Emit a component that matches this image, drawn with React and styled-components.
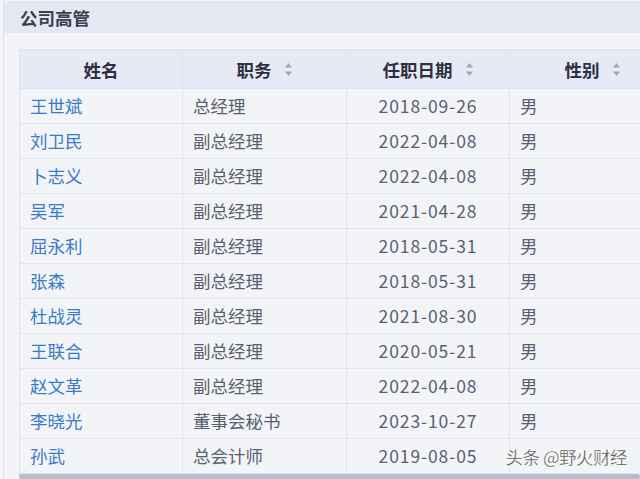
import React from "react";
import styled, { createGlobalStyle } from "styled-components";

const Global = createGlobalStyle`
  html, body { margin: 0; padding: 0; background: #f3f4f8; overflow: hidden; }
  body { font-family: "Noto Sans CJK SC", "Noto Sans", sans-serif; }
`;

const Page = styled.div`
  width: 640px;
  height: 479px;
  position: relative;
  overflow: hidden;
  background: #f3f4f8;
`;

const Panel = styled.div`
  margin-left: 3px;
  border-left: 1px solid #e2e4ec;
  height: 100%;
  display: flex;
  flex-direction: column;
`;

const TitleBar = styled.div`
  margin-top: 1px;
  height: 36px;
  background: #e5e8f2;
  display: flex;
  align-items: center;
  padding-left: 16px;
  font-size: 17.5px;
  font-weight: 700;
  color: #3a3f4f;
`;

const TableWrap = styled.div`
  margin: 16px 0 0 15px;
  position: relative;
`;

const Table = styled.table`
  border-collapse: collapse;
  table-layout: fixed;
  width: 656px;
  font-size: 17.5px;
`;

const Th = styled.th`
  height: 38px;
  background: #e7eaf5;
  color: #2c3142;
  font-weight: 700;
  text-align: center;
  border: 1px solid #e0e3ed;
  padding: 0;
  white-space: nowrap;
`;

const Td = styled.td`
  height: 34px;
  border: 1px solid #e3e5ee;
  padding: 0 ${(p) => (p.$align === "center" ? 0 : 10)}px;
  text-align: ${(p) => p.$align || "left"};
  color: ${(p) => (p.$link ? "#3b7bc4" : "#5a5f6f")};
  letter-spacing: ${(p) => (p.$align === "center" ? "0.9px" : "0")};
  white-space: nowrap;
  background: #f3f4f8;
  line-height: 1;
`;

const HeadInner = styled.span`
  display: inline-flex;
  align-items: center;
  gap: 12px;
`;

const Scroll = styled.div`
  height: 5px;
  background: #b8bcc9;
  border-radius: 2px;
`;

const Watermark = styled.div`
  position: absolute;
  right: 13px;
  bottom: 10px;
  font-size: 17.5px;
  color: #4a4a4a;
  font-family: "Noto Sans CJK SC", sans-serif;
  -webkit-text-stroke: 0.3px #ffffff;
  text-shadow: 0 0 2px #fff, 0 0 2px #fff;
  letter-spacing: -0.5px;
`;

const SortIcon = () => (
  <svg width="9" height="15" viewBox="0 0 9 15">
    <path d="M4.5 1 L8 5.5 H1 Z" fill="#a3a8b8" />
    <path d="M4.5 14 L8 9.5 H1 Z" fill="#a3a8b8" />
  </svg>
);

// the last row's gender is covered by the watermark in the screenshot
const rows = [
  ["王世斌", "总经理", "2018-09-26", "男"],
  ["刘卫民", "副总经理", "2022-04-08", "男"],
  ["卜志义", "副总经理", "2022-04-08", "男"],
  ["吴军", "副总经理", "2021-04-28", "男"],
  ["屈永利", "副总经理", "2018-05-31", "男"],
  ["张森", "副总经理", "2018-05-31", "男"],
  ["杜战灵", "副总经理", "2021-08-30", "男"],
  ["王联合", "副总经理", "2020-05-21", "男"],
  ["赵文革", "副总经理", "2022-04-08", "男"],
  ["李晓光", "董事会秘书", "2023-10-27", "男"],
  ["孙武", "总会计师", "2019-08-05", ""],
];

export default function App() {
  return (
    <Page>
      <Global />
      <Panel>
        <TitleBar>公司高管</TitleBar>
        <TableWrap>
          <Table>
            <colgroup>
              <col style={{ width: 163 }} />
              <col style={{ width: 164 }} />
              <col style={{ width: 163 }} />
              <col style={{ width: 166 }} />
            </colgroup>
            <thead>
              <tr>
                <Th>姓名</Th>
                <Th><HeadInner>职务<SortIcon /></HeadInner></Th>
                <Th><HeadInner>任职日期<SortIcon /></HeadInner></Th>
                <Th><HeadInner>性别<SortIcon /></HeadInner></Th>
              </tr>
            </thead>
            <tbody>
              {rows.map((r) => (
                <tr key={r[0]}>
                  <Td $link>{r[0]}</Td>
                  <Td>{r[1]}</Td>
                  <Td $align="center">{r[2]}</Td>
                  <Td>{r[3]}</Td>
                </tr>
              ))}
            </tbody>
          </Table>
          <Scroll />
        </TableWrap>
      </Panel>
      <Watermark>头条 @野火财经</Watermark>
    </Page>
  );
}
